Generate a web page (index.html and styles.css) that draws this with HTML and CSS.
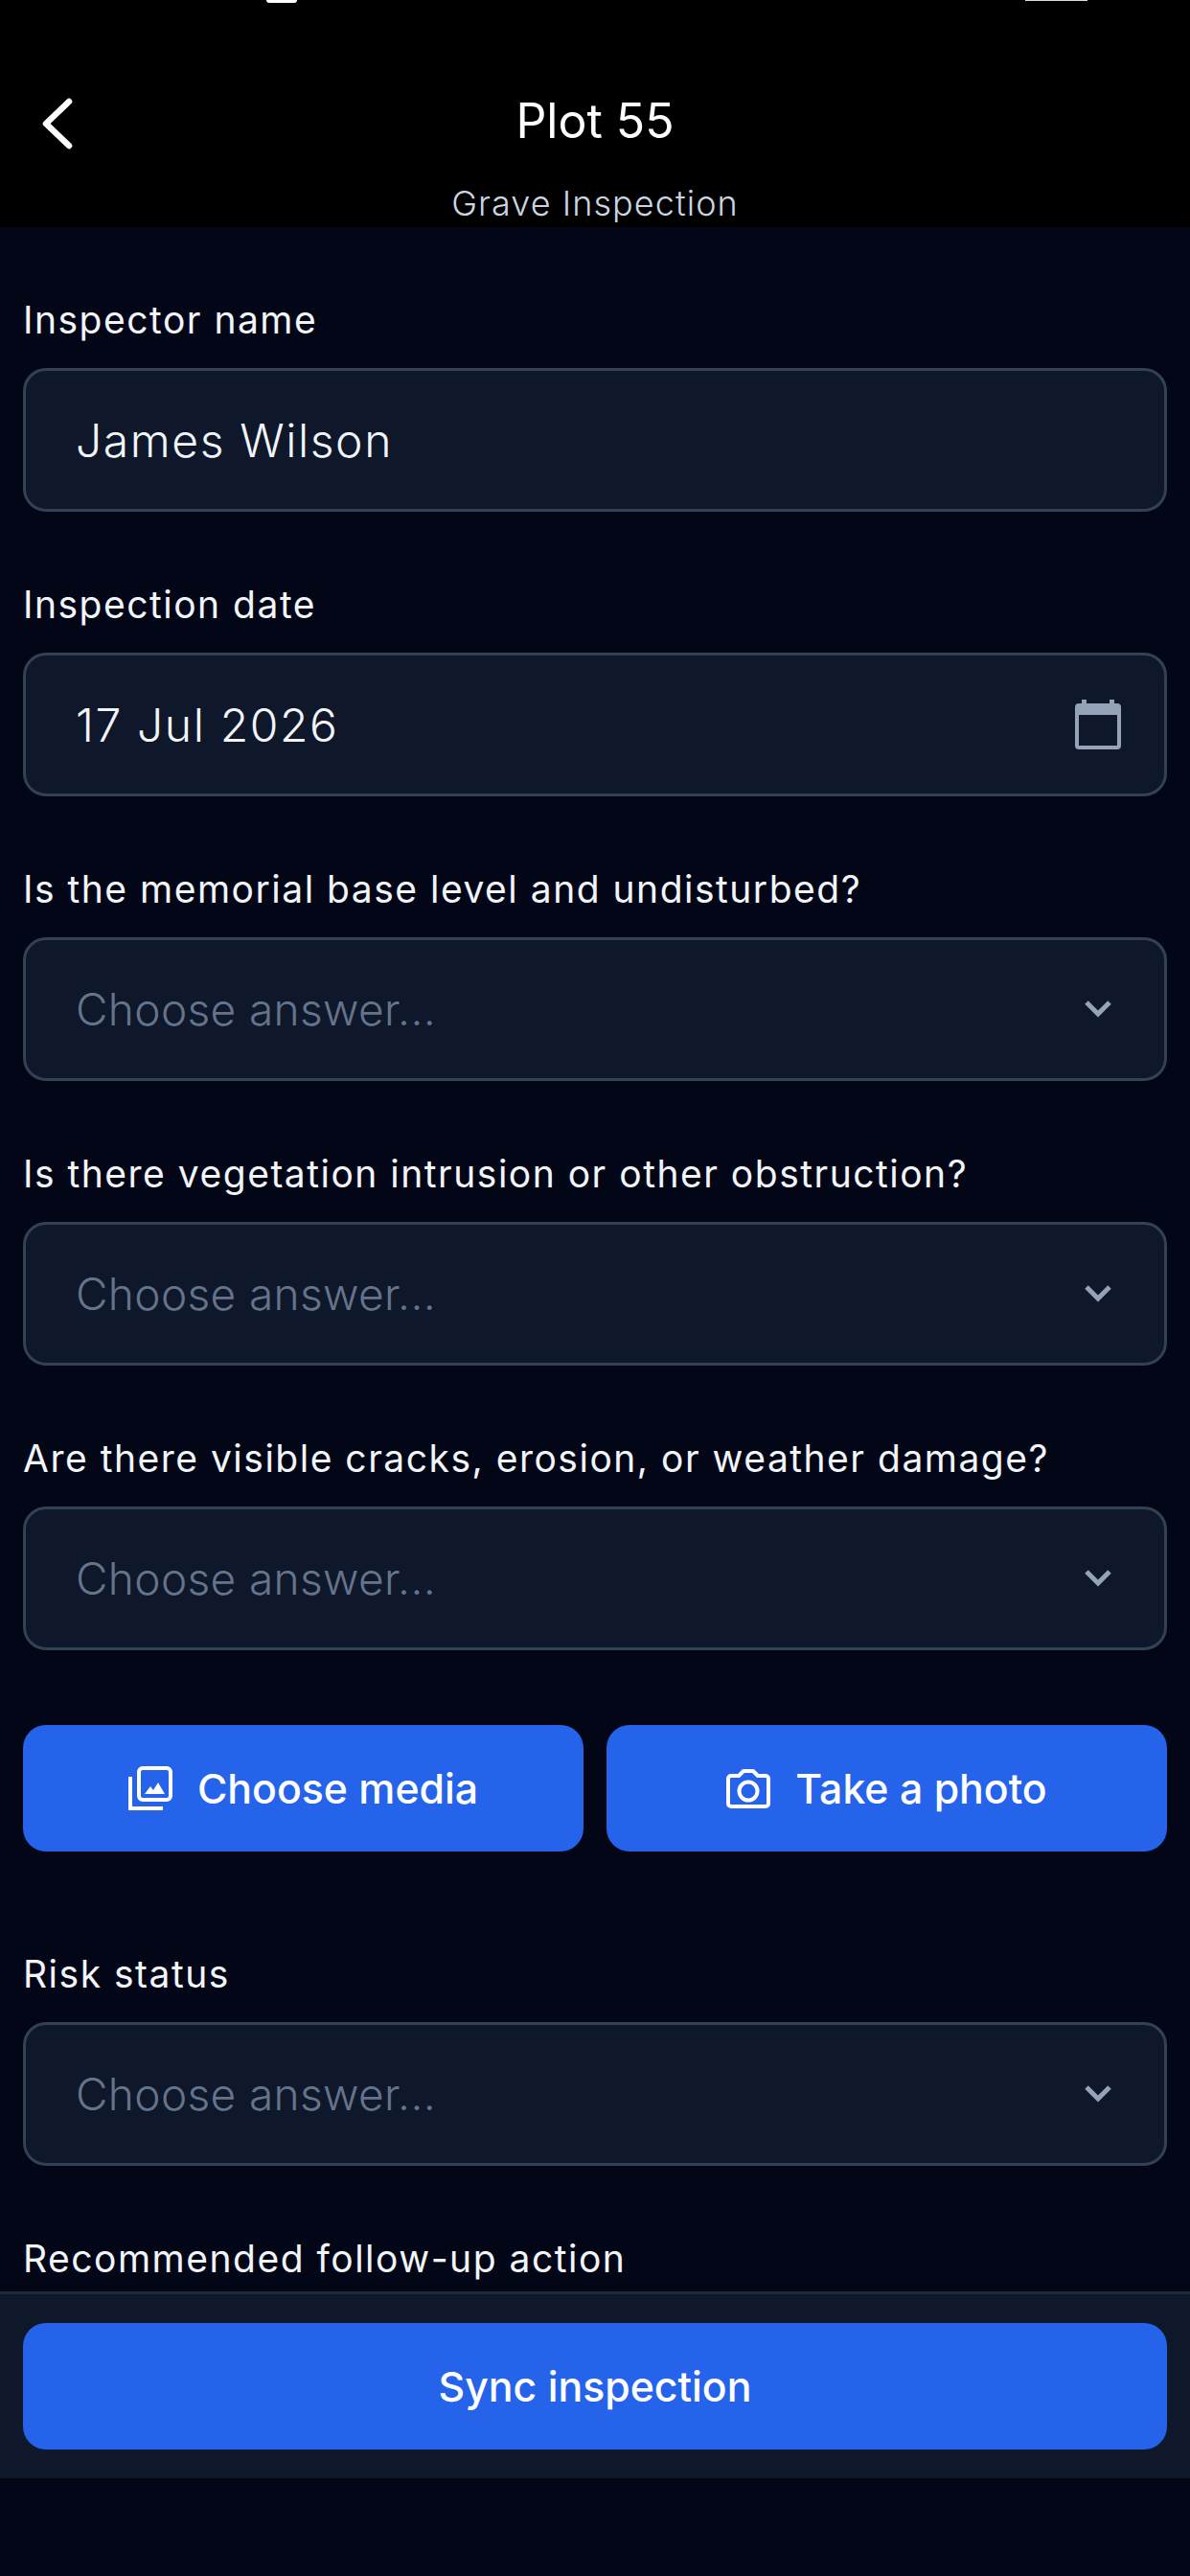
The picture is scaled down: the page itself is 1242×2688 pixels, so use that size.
FILE: index.html

```html
<!DOCTYPE html>
<html lang="en">
<head>
    <meta charset="UTF-8">
    <meta name="viewport" content="width=device-width, initial-scale=1.0">
    <title>Grave Inspection</title>
    <link rel="stylesheet" href="styles.css">
</head>
<body>
    <div class="app">
        <div class="status-bar">
            <span class="status-left"></span>
            <span class="status-right"></span>
        </div>

        <header class="header">
            <div class="header-top">
                <svg class="back-icon" width="36" height="60" viewBox="0 0 36 60">
                    <path d="M30 7 L6 30 L30 53" fill="none" stroke="#fff" stroke-width="6.5" stroke-linecap="round" stroke-linejoin="round"/>
                </svg>
                <h1 class="title">Plot 55</h1>
            </div>
            <p class="subtitle">Grave Inspection</p>
        </header>

        <main class="form">
            <div class="field">
                <label class="label">Inspector name</label>
                <div class="input"><span class="value">James Wilson</span></div>
            </div>

            <div class="field">
                <label class="label">Inspection date</label>
                <div class="input">
                    <span class="value">17 Jul 2026</span>
                    <svg class="calendar-icon" width="48" height="54" viewBox="0 0 48 54">
                        <path d="M7 1 H12 V5 H36 V1 H41 V5 H44 A4 4 0 0 1 48 9 V49 A4 4 0 0 1 44 53 H4 A4 4 0 0 1 0 49 V9 A4 4 0 0 1 4 5 H7 Z M4 17 V49 H44 V17 Z" fill="#94a3b8" fill-rule="evenodd"/>
                    </svg>
                </div>
            </div>

            <div class="field">
                <label class="label">Is the memorial base level and undisturbed?</label>
                <div class="input">
                    <span class="placeholder">Choose answer...</span>
                    <svg class="chevron" width="30" height="20" viewBox="0 0 30 20">
                        <path d="M3 3 L15 15 L27 3" fill="none" stroke="#94a3b8" stroke-width="5"/>
                    </svg>
                </div>
            </div>

            <div class="field">
                <label class="label">Is there vegetation intrusion or other obstruction?</label>
                <div class="input">
                    <span class="placeholder">Choose answer...</span>
                    <svg class="chevron" width="30" height="20" viewBox="0 0 30 20">
                        <path d="M3 3 L15 15 L27 3" fill="none" stroke="#94a3b8" stroke-width="5"/>
                    </svg>
                </div>
            </div>

            <div class="field">
                <label class="label">Are there visible cracks, erosion, or weather damage?</label>
                <div class="input">
                    <span class="placeholder">Choose answer...</span>
                    <svg class="chevron" width="30" height="20" viewBox="0 0 30 20">
                        <path d="M3 3 L15 15 L27 3" fill="none" stroke="#94a3b8" stroke-width="5"/>
                    </svg>
                </div>
            </div>

            <div class="media-buttons">
                <button class="btn">
                    <svg width="46" height="46" viewBox="0 0 46 46">
                        <rect x="11" y="2" width="33" height="33" rx="4" fill="none" stroke="#fff" stroke-width="4"/>
                        <path d="M2 11 V44 H36" fill="none" stroke="#fff" stroke-width="4"/>
                        <path d="M17 29 L23 21 L26 25 L31 17 L38 29 Z" fill="#fff"/>
                    </svg>
                    <span>Choose media</span>
                </button>
                <button class="btn">
                    <svg width="46" height="42" viewBox="0 0 46 42">
                        <path d="M5 8 H13 L18 3 H28 L33 8 H41 A3 3 0 0 1 44 11 V37 A3 3 0 0 1 41 40 H5 A3 3 0 0 1 2 37 V11 A3 3 0 0 1 5 8 Z" fill="none" stroke="#fff" stroke-width="4" stroke-linejoin="round"/>
                        <circle cx="23" cy="24" r="9.5" fill="none" stroke="#fff" stroke-width="4"/>
                    </svg>
                    <span>Take a photo</span>
                </button>
            </div>

            <div class="field">
                <label class="label">Risk status</label>
                <div class="input">
                    <span class="placeholder">Choose answer...</span>
                    <svg class="chevron" width="30" height="20" viewBox="0 0 30 20">
                        <path d="M3 3 L15 15 L27 3" fill="none" stroke="#94a3b8" stroke-width="5"/>
                    </svg>
                </div>
            </div>

            <div class="field">
                <label class="label">Recommended follow-up action</label>
            </div>
        </main>

        <footer class="footer">
            <button class="btn">Sync inspection</button>
        </footer>

        <div class="bottom-space"></div>
    </div>
</body>
</html>
```

FILE: styles.css

```css
* {
    box-sizing: border-box;
}

body {
    margin: 0;
    background-color: #020617;
    font-family: "Inter", "Liberation Sans", sans-serif;
}

.app {
    display: flex;
    flex-direction: column;
    width: 1242px;
    height: 2688px;
    overflow: hidden;
}

/* Remains of the status bar, cut off at the top edge */
.status-bar {
    display: flex;
    height: 20px;
    padding-left: 278px;
    background-color: #000;
}

.status-left {
    width: 32px;
    height: 3px;
    background-color: #fff;
    border-radius: 0 0 4px 4px;
}

.status-right {
    width: 65px;
    height: 1px;
    margin-left: 760px;
    background-color: #ddd;
}

.header {
    height: 217px;
    background-color: #000;
}

.header-top {
    display: flex;
    align-items: center;
    justify-content: center;
    position: relative;
    height: 60px;
    margin-top: 76px;
}

.back-icon {
    position: absolute;
    left: 42px;
    top: 3px;
}

.title {
    margin: 0;
    color: #fff;
    font-size: 50px;
    font-weight: 400;
    line-height: 60px;
}

.subtitle {
    margin: 34px 0 0;
    color: #cbd5e1;
    font-size: 36px;
    font-weight: 300;
    line-height: 44px;
    letter-spacing: 1.05px;
    text-align: center;
}

.form {
    flex: 1;
    min-height: 0;
    overflow: hidden;
    padding: 72px 24px 0;
}

.field {
    margin-bottom: 72px;
}

.label {
    display: block;
    height: 50px;
    margin-bottom: 25px;
    color: #f1f5f9;
    font-size: 39px;
    font-weight: 420;
    line-height: 50px;
    letter-spacing: 1.5px;
}

.input {
    display: flex;
    align-items: center;
    justify-content: space-between;
    height: 150px;
    padding: 0 45px 0 52px;
    background-color: #0f172a;
    border: 3px solid #334155;
    border-radius: 24px;
}

.value {
    color: #f1f5f9;
    font-size: 48px;
    font-weight: 300;
    letter-spacing: 1.6px;
}

.placeholder {
    color: #64748b;
    font-size: 46px;
    font-weight: 300;
    letter-spacing: 0.35px;
}

.chevron {
    margin-right: 9px;
}

.media-buttons {
    display: flex;
    gap: 24px;
    margin: 78px 0 103px;
}

.btn {
    display: flex;
    flex: 1;
    align-items: center;
    justify-content: center;
    gap: 26px;
    height: 132px;
    padding: 0;
    color: #fff;
    background-color: #2563eb;
    border: none;
    border-radius: 24px;
    font-family: inherit;
    font-size: 42.8px;
    font-weight: 450;
}

.footer {
    display: flex;
    height: 195px;
    padding: 30px 24px;
    background-color: #0f172a;
    border-top: 3px solid #1e293b;
}

.bottom-space {
    height: 102px;
}
```
